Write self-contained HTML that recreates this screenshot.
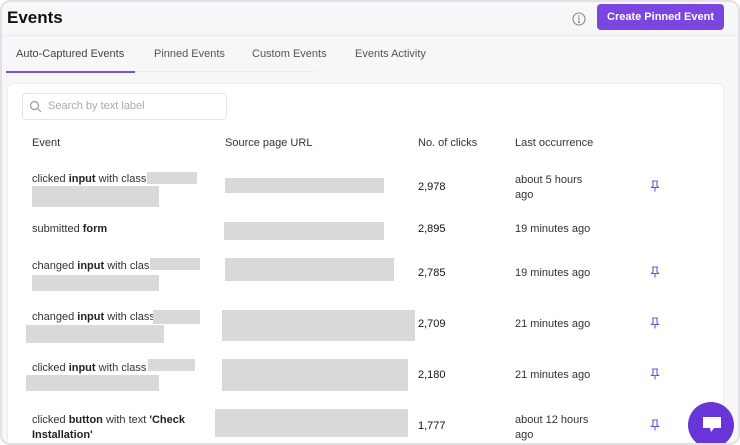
<!DOCTYPE html>
<html><head><meta charset="utf-8"><style>
*{margin:0;padding:0;box-sizing:border-box}
body{width:740px;height:445px;overflow:hidden;background:#fff;font-family:"Liberation Sans",sans-serif;color:#222;position:relative}
.frame{position:absolute;left:0;top:0;width:740px;height:445px;background:#f7f7f9;border:2px solid #e2e2e6;border-radius:10px;overflow:hidden}
.a{position:absolute;white-space:nowrap}
.g{position:absolute;background:#d9d9d9}
.t{font-size:11px;color:#333}
.n{font-size:11px;color:#111}
b{font-weight:bold;color:#222}
.pin{position:absolute;width:10px;height:12px}
</style></head><body>
<div class="frame">
<div class="a" style="left:5px;top:6px;font-size:17px;font-weight:bold;color:#111">Events</div>
<svg class="a" style="left:570px;top:10px" width="14" height="14" viewBox="0 0 14 14"><circle cx="7" cy="7" r="6" fill="none" stroke="#888" stroke-width="1.1"/><path d="M7 6V10.5M6 10.5H8M6 6H7" stroke="#888" stroke-width="1"/><circle cx="7" cy="4" r="0.8" fill="#888"/></svg>
<div class="a" style="left:595px;top:2px;width:127px;height:26px;background:#7b45e0;border-radius:4px;color:#fff;font-size:11px;font-weight:bold;text-align:center;line-height:26px">Create Pinned Event</div>
<div class="a" style="left:0;top:33px;width:740px;height:1px;background:#ececef"></div>
<div class="a t" style="left:14px;top:46px;color:#444">Auto-Captured Events</div>
<div class="a t" style="left:152px;top:46px;color:#555">Pinned Events</div>
<div class="a t" style="left:250px;top:46px;color:#555">Custom Events</div>
<div class="a t" style="left:353px;top:46px;color:#555">Events Activity</div>
<div class="a" style="left:4px;top:69px;width:310px;height:1px;background:#ececef"></div>
<div class="a" style="left:4px;top:69px;width:129px;height:2px;background:#7b52d6"></div>
<div class="a" style="left:5px;top:81px;width:717px;height:380px;background:#fff;border-radius:6px;border:1px solid #eeeef0"></div>
<div class="a" style="left:20px;top:91px;width:205px;height:27px;border:1px solid #e3e3e6;border-radius:4px;background:#fff"></div>
<svg class="a" style="left:27px;top:98px" width="13" height="13" viewBox="0 0 13 13"><circle cx="5.5" cy="5.5" r="4" fill="none" stroke="#999" stroke-width="1.2"/><path d="M8.5 8.5L12 12" stroke="#999" stroke-width="1.2"/></svg>
<div class="a" style="left:46px;top:98px;font-size:11px;color:#aaa">Search by text label</div>
<div class="a t" style="left:30px;top:135px">Event</div>
<div class="a t" style="left:223px;top:135px">Source page URL</div>
<div class="a t" style="left:416px;top:135px">No. of clicks</div>
<div class="a t" style="left:513px;top:135px">Last occurrence</div>

<div class="a t" style="left:30px;top:171px">clicked <b>input</b> with class '</div>
<div class="g" style="left:145px;top:170px;width:50px;height:12px"></div>
<div class="g" style="left:30px;top:184px;width:127px;height:21px"></div>
<div class="g" style="left:223px;top:176px;width:159px;height:15px"></div>
<div class="a n" style="left:416px;top:179px">2,978</div>
<div class="a t" style="left:513px;top:171px;line-height:15px">about 5 hours<br>ago</div>

<div class="a t" style="left:30px;top:221px">submitted <b>form</b></div>
<div class="g" style="left:222px;top:220px;width:160px;height:18px"></div>
<div class="a n" style="left:416px;top:221px">2,895</div>
<div class="a t" style="left:513px;top:221px">19 minutes ago</div>

<div class="a t" style="left:30px;top:258px">changed <b>input</b> with class</div>
<div class="g" style="left:148px;top:256px;width:50px;height:12px"></div>
<div class="g" style="left:30px;top:273px;width:127px;height:16px"></div>
<div class="g" style="left:223px;top:256px;width:169px;height:23px"></div>
<div class="a n" style="left:416px;top:265px">2,785</div>
<div class="a t" style="left:513px;top:265px">19 minutes ago</div>

<div class="a t" style="left:30px;top:309px">changed <b>input</b> with class</div>
<div class="g" style="left:151px;top:308px;width:47px;height:14px"></div>
<div class="g" style="left:24px;top:323px;width:138px;height:18px"></div>
<div class="g" style="left:220px;top:308px;width:193px;height:31px"></div>
<div class="a n" style="left:416px;top:316px">2,709</div>
<div class="a t" style="left:513px;top:316px">21 minutes ago</div>

<div class="a t" style="left:30px;top:360px">clicked <b>input</b> with class '</div>
<div class="g" style="left:146px;top:357px;width:47px;height:12px"></div>
<div class="g" style="left:24px;top:373px;width:133px;height:16px"></div>
<div class="g" style="left:220px;top:357px;width:186px;height:32px"></div>
<div class="a n" style="left:416px;top:367px">2,180</div>
<div class="a t" style="left:513px;top:367px">21 minutes ago</div>

<div class="a t" style="left:30px;top:411px;line-height:15px">clicked <b>button</b> with text <b>'Check<br>Installation'</b></div>
<div class="g" style="left:213px;top:407px;width:193px;height:28px"></div>
<div class="a n" style="left:416px;top:418px">1,777</div>
<div class="a t" style="left:513px;top:411px;line-height:15px">about 12 hours<br>ago</div>

<svg class="pin" style="left:648px;top:178px" viewBox="0 0 10 12"><path d="M2 1H8M3 1V6L1.5 7.5H8.5L7 6V1M5 7.5V11.5" fill="none" stroke="#7b52d6" stroke-width="1.1"/></svg>
<svg class="pin" style="left:648px;top:264px" viewBox="0 0 10 12"><path d="M2 1H8M3 1V6L1.5 7.5H8.5L7 6V1M5 7.5V11.5" fill="none" stroke="#7b52d6" stroke-width="1.1"/></svg>
<svg class="pin" style="left:648px;top:315px" viewBox="0 0 10 12"><path d="M2 1H8M3 1V6L1.5 7.5H8.5L7 6V1M5 7.5V11.5" fill="none" stroke="#7b52d6" stroke-width="1.1"/></svg>
<svg class="pin" style="left:648px;top:366px" viewBox="0 0 10 12"><path d="M2 1H8M3 1V6L1.5 7.5H8.5L7 6V1M5 7.5V11.5" fill="none" stroke="#7b52d6" stroke-width="1.1"/></svg>
<svg class="pin" style="left:648px;top:417px" viewBox="0 0 10 12"><path d="M2 1H8M3 1V6L1.5 7.5H8.5L7 6V1M5 7.5V11.5" fill="none" stroke="#7b52d6" stroke-width="1.1"/></svg>

<div class="a" style="left:686px;top:400px;width:46px;height:46px;border-radius:50%;background:#6a35d6"></div>
<svg class="a" style="left:699px;top:413px" width="22" height="20" viewBox="0 0 22 20"><path d="M2 2H20V13H13L10 17L9 13H2Z" fill="#fff"/></svg>
</div>
</body></html>
